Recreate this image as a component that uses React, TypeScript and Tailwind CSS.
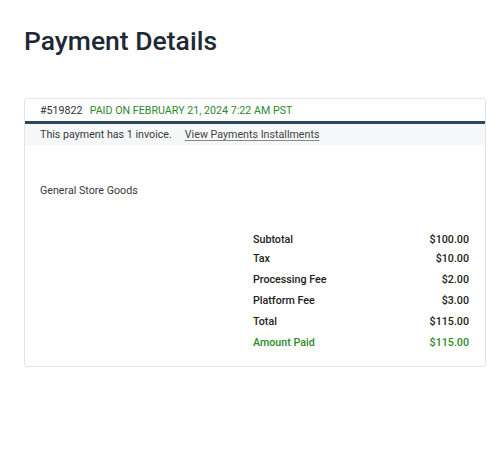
export default function App() {
  const rows = [
    { label: "Subtotal", value: "$100.00", h: "h-[19px]" },
    { label: "Tax", value: "$10.00", h: "h-[20px]" },
    { label: "Processing Fee", value: "$2.00", h: "h-[21px]" },
    { label: "Platform Fee", value: "$3.00", h: "h-[21px]" },
    { label: "Total", value: "$115.00", h: "h-[21px]" },
  ];

  return (
    <main className="min-h-[460px] bg-white px-6 pt-[26px] font-['Roboto',sans-serif] text-[#222]">
      <h1 className="text-[26.5px] font-medium leading-[30px] text-[#1e2933]">Payment Details</h1>

      <section className="mt-[42px] w-[462px] rounded-[3px] border border-[#e2e4e6]">
        <div className="flex items-center gap-[7px] px-[15px] pt-[4px] pb-[3px] text-[10.7px] leading-[15px]">
          <span className="text-[#333]">#519822</span>
          <span className="text-[#2b8a2b]">PAID ON FEBRUARY 21, 2024 7:22 AM PST</span>
        </div>
        <div className="h-[3px] bg-[#2d475a]" />
        <div className="flex gap-[13px] bg-[#f6f7f8] px-[15px] py-[3px] text-[10.7px] leading-[15px] text-[#3a3a3a]">
          <span>This payment has 1 invoice.</span>
          <a href="#" className="text-[#444] underline decoration-[#888] underline-offset-2">
            View Payments Installments
          </a>
        </div>

        <p className="px-[15px] pt-[38px] text-[10.7px] leading-[16px] text-[#3a3a3a]">General Store Goods</p>

        <div className="ml-[228px] mr-[16px] mt-[31px] pb-[12px] text-[10.7px] font-medium leading-[16px]">
          {rows.map((r) => (
            <div key={r.label} className={`flex ${r.h} items-center justify-between text-[#222]`}>
              <span>{r.label}</span>
              <span>{r.value}</span>
            </div>
          ))}
          <div className="flex h-[22px] items-center justify-between text-[#2b8a2b]">
            <span>Amount Paid</span>
            <span>$115.00</span>
          </div>
        </div>
      </section>
    </main>
  );
}
